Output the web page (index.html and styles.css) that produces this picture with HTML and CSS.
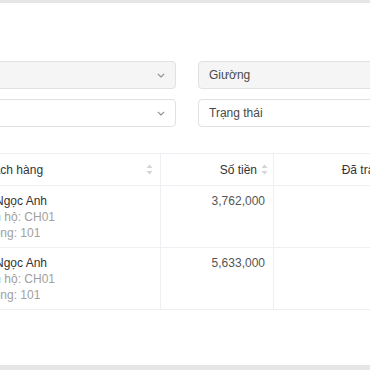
FILE: index.html
```html
<!DOCTYPE html>
<html lang="vi">
<head>
<meta charset="utf-8">
<link rel="stylesheet" href="styles.css">
</head>
<body>
<div class="top-bar"></div>
<main class="content">
  <section class="filters">
    <div class="select disabled">
      <span class="value"></span>
      <svg class="chev" width="8" height="5" viewBox="0 0 8 5"><polyline points="0.8,0.8 4,4 7.2,0.8" fill="none" stroke="#8c8c8c" stroke-width="1.1"/></svg>
    </div>
    <div class="select disabled"><span class="value">Giường</span></div>
    <div class="select">
      <span class="value"></span>
      <svg class="chev" width="8" height="5" viewBox="0 0 8 5"><polyline points="0.8,0.8 4,4 7.2,0.8" fill="none" stroke="#8c8c8c" stroke-width="1.1"/></svg>
    </div>
    <div class="select"><span class="value">Trạng thái</span></div>
  </section>

  <section class="table">
    <div class="row head">
      <div class="cell c1"><span>Khách hàng</span>
        <svg class="sort" width="7" height="11" viewBox="0 0 7 11"><polygon points="3.5,0.5 6.5,4 0.5,4" fill="#d4d4d4"/><polygon points="3.5,10.5 6.5,7 0.5,7" fill="#d4d4d4"/></svg>
      </div>
      <div class="cell c2"><span>Số tiền</span>
        <svg class="sort" width="7" height="11" viewBox="0 0 7 11"><polygon points="3.5,0.5 6.5,4 0.5,4" fill="#d4d4d4"/><polygon points="3.5,10.5 6.5,7 0.5,7" fill="#d4d4d4"/></svg>
      </div>
      <div class="cell c3"><span>Đã trả</span></div>
    </div>
    <div class="row">
      <div class="cell c1">
        <div class="name">Lý Ngọc Anh</div>
        <div class="sub">Căn hộ: CH01</div>
        <div class="sub">Phòng: 101</div>
      </div>
      <div class="cell c2 amount">3,762,000</div>
      <div class="cell c3"></div>
    </div>
    <div class="row">
      <div class="cell c1">
        <div class="name">Lý Ngọc Anh</div>
        <div class="sub">Căn hộ: CH01</div>
        <div class="sub">Phòng: 101</div>
      </div>
      <div class="cell c2 amount">5,633,000</div>
      <div class="cell c3"></div>
    </div>
  </section>
</main>
<div class="bottom-bar"></div>
</body>
</html>
```

FILE: styles.css
```css
html, body {
  margin: 0;
  padding: 0;
  background: #ffffff;
}
body {
  width: 370px;
  height: 370px;
  overflow: hidden;
  font-family: "Liberation Sans", Arial, sans-serif;
  font-size: 12px;
  color: #333333;
  display: flex;
  flex-direction: column;
}
.top-bar {
  height: 3px;
  background: #e6e6e6;
  flex: none;
}
.content {
  flex: 1;
  margin-left: -40px;
  width: 520px;
}
.filters {
  margin-top: 58px;
  display: grid;
  grid-template-columns: 216px 216px;
  column-gap: 22px;
  row-gap: 10px;
}
.select {
  box-sizing: border-box;
  height: 28px;
  border: 1px solid #e1e1e1;
  border-radius: 4px;
  background: #ffffff;
  display: flex;
  align-items: center;
  justify-content: space-between;
  padding: 0 10px 0 10px;
}
.select.disabled {
  background: #f5f5f5;
}
.value {
  color: #4a4a4a;
  font-size: 12px;
}
.chev {
  display: block;
}
.table {
  margin-top: 26px;
  border-top: 1px solid #efeff3;
}
.row {
  display: grid;
  grid-template-columns: 201px 113px 168px;
  border-bottom: 1px solid #efeff3;
}
.row.head {
  height: 31px;
}
.cell {
  box-sizing: border-box;
  border-right: 1px solid #efeff3;
}
.cell.c3 {
  border-right: none;
}
.head .cell {
  display: flex;
  align-items: center;
  color: #333333;
}
.head .c1 {
  padding: 0 7px 0 19px;
  justify-content: space-between;
}
.head .c2 {
  padding: 0 5px 0 8px;
  justify-content: flex-end;
  gap: 4px;
}
.head .c3 {
  justify-content: center;
}
.sort {
  display: block;
}
.row:not(.head) {
  height: 61px;
}
.row:not(.head) .cell {
  padding: 7px 8px;
  line-height: 16px;
}
.row:not(.head) .c1 {
  padding-left: 19px;
}
.name {
  color: #333333;
}
.sub {
  color: #a0a0a0;
}
.amount {
  text-align: right;
  color: #555555;
}
.bottom-bar {
  height: 5px;
  background: #e6e6e6;
  flex: none;
}
```
